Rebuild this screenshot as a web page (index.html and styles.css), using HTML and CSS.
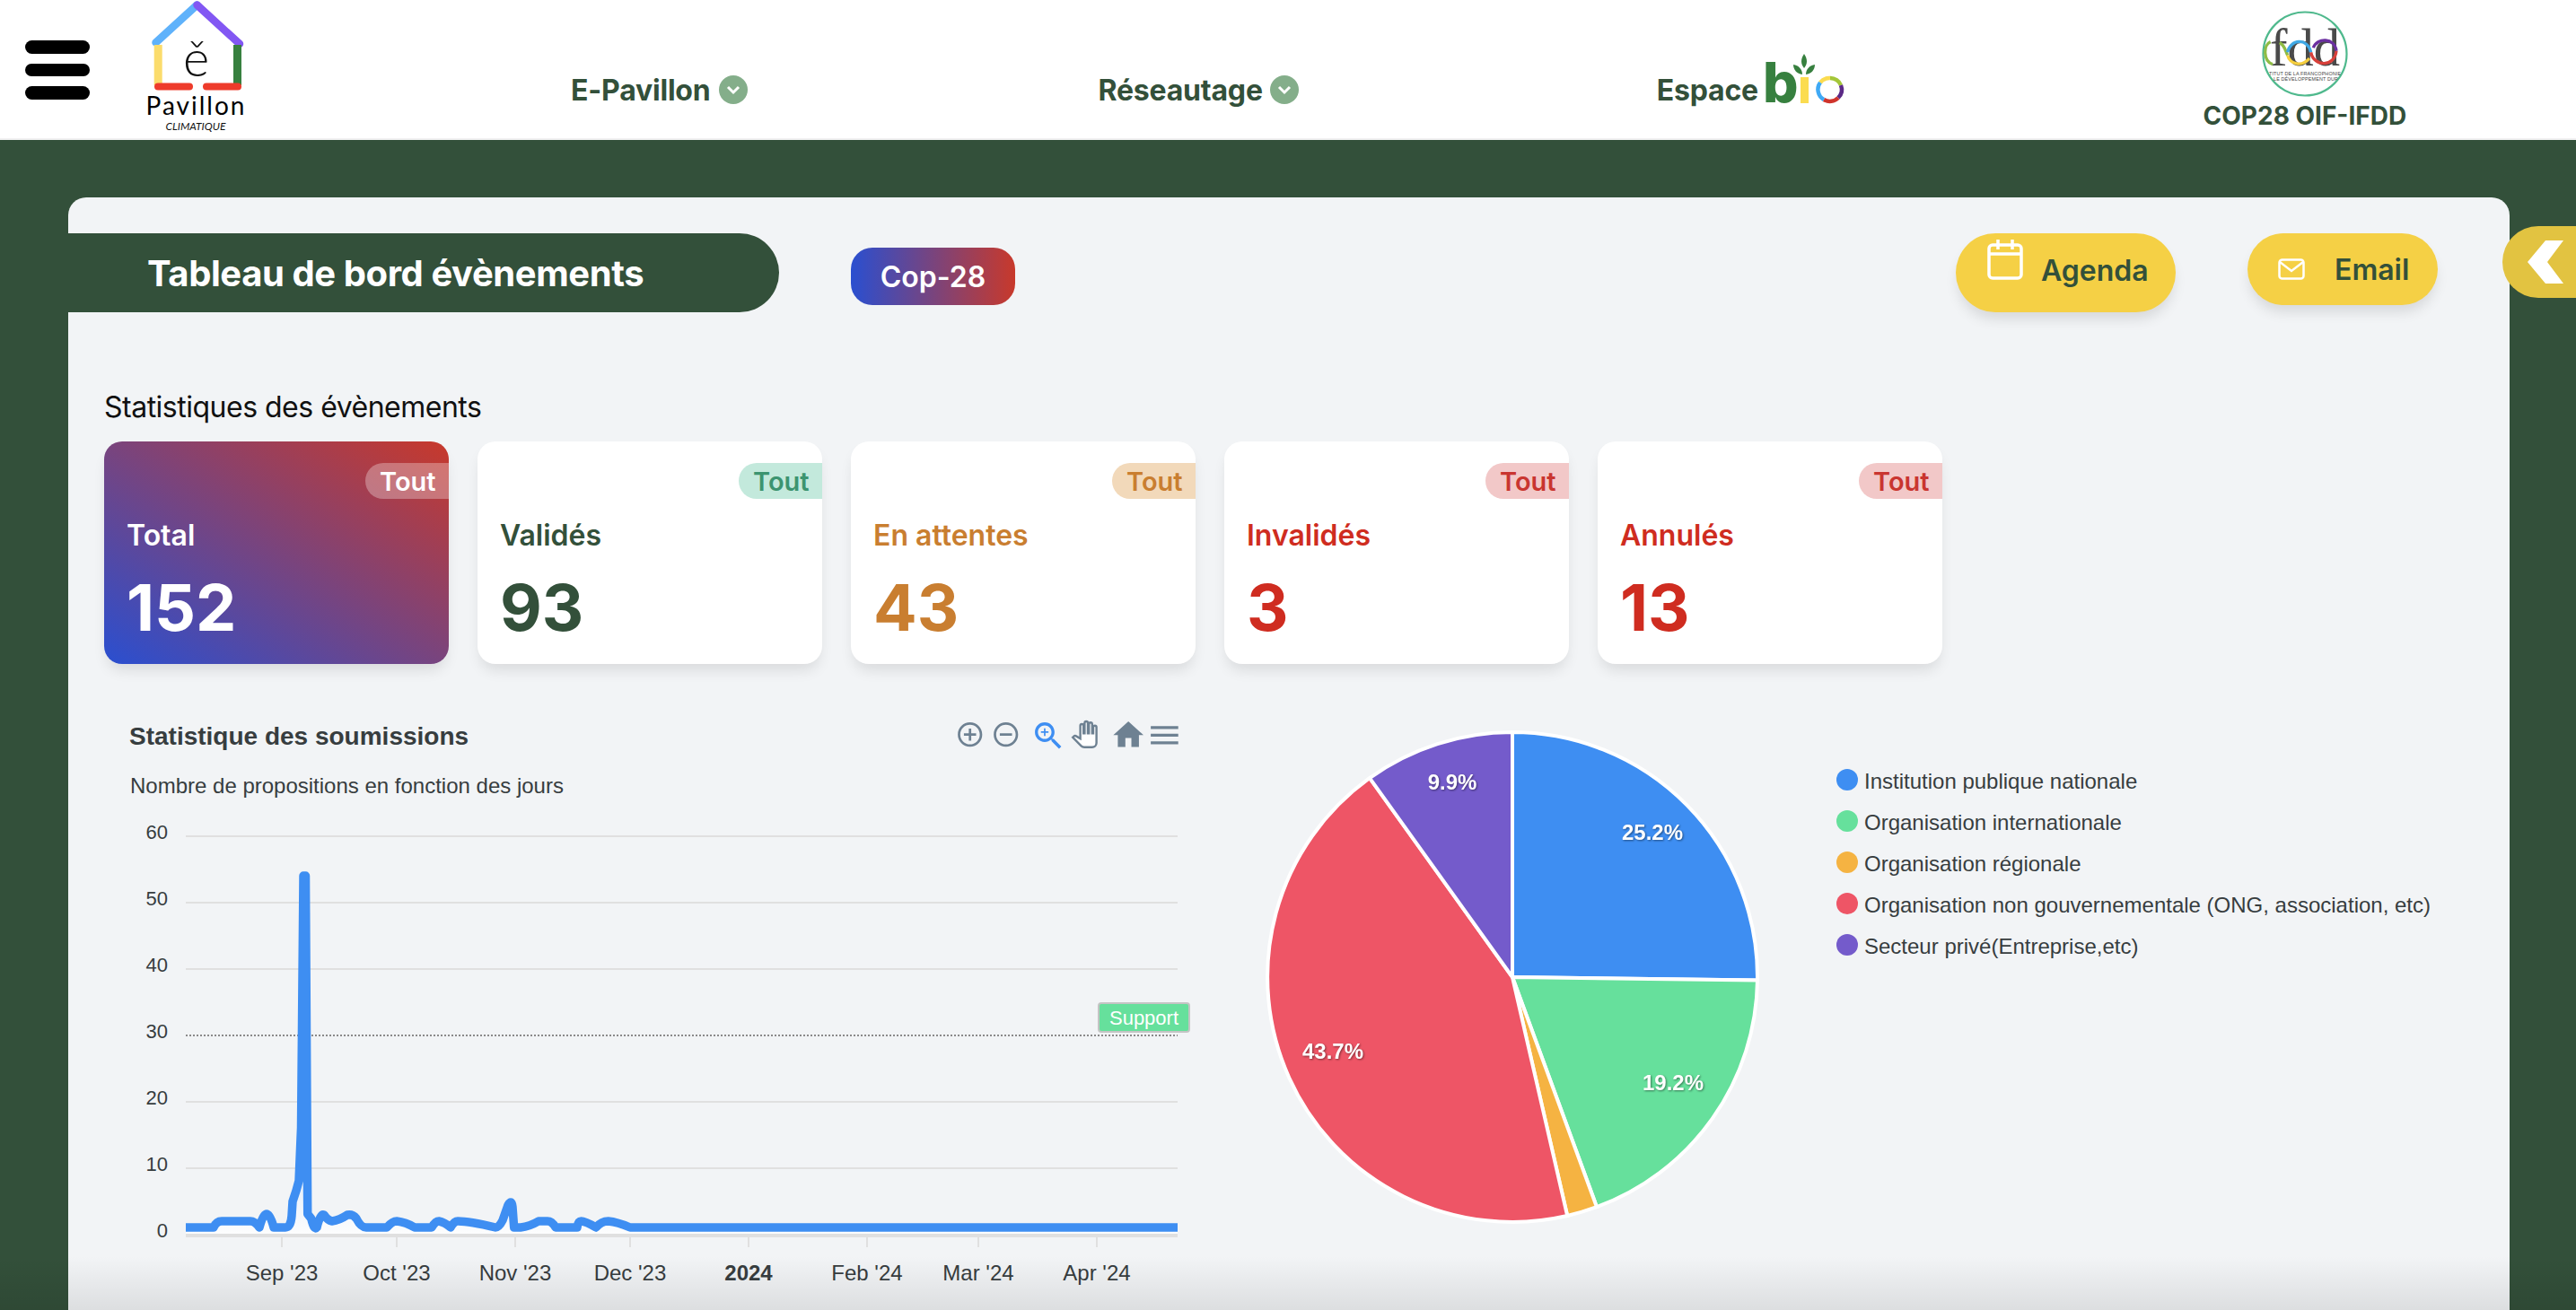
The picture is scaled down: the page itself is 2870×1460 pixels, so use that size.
FILE: index.html
```html
<!DOCTYPE html>
<html lang="fr">
<head>
    <meta charset="UTF-8">
    <meta name="viewport" content="width=device-width, initial-scale=1.0">
    <title>Tableau de bord évènements</title>
    <link rel="stylesheet" href="styles.css">
</head>
<body>
    <!-- Barre du haut -->
    <header class="topbar">
        <div class="burger"><span></span><span></span><span></span></div>

        <svg class="logo" viewBox="160 0 120 156" width="120" height="156">
            <line x1="173.5" y1="47.5" x2="219.5" y2="5.5" stroke="#5fb2fb" stroke-width="8.5" stroke-linecap="round"/>
            <line x1="219.5" y1="5.5" x2="267" y2="49" stroke="#8257f3" stroke-width="8.5" stroke-linecap="round"/>
            <rect x="171.7" y="50" width="9" height="45" fill="#fbdc6c"/>
            <rect x="260" y="50" width="9" height="45" fill="#37803f"/>
            <line x1="176" y1="96.5" x2="211" y2="96.5" stroke="#ee3b2b" stroke-width="8" stroke-linecap="round"/>
            <line x1="230" y1="96.5" x2="265" y2="96.5" stroke="#ee3b2b" stroke-width="8" stroke-linecap="round"/>
            <text class="logo-e" x="218.5" y="85" text-anchor="middle">ě</text>
            <text class="logo-name" x="218.5" y="128" text-anchor="middle">Pavillon</text>
            <text class="logo-sub" x="218" y="145" text-anchor="middle">CLIMATIQUE</text>
        </svg>

        <a class="nav-item nav-pavillon">E-Pavillon
            <svg class="chevron" viewBox="0 0 32 32" width="32" height="32"><circle cx="16" cy="16" r="16" fill="#84ae8a"/><path d="M10 13l6 6 6-6" fill="none" stroke="#fff" stroke-width="3"/></svg>
        </a>
        <a class="nav-item nav-reseau">Réseautage
            <svg class="chevron" viewBox="0 0 32 32" width="32" height="32"><circle cx="16" cy="16" r="16" fill="#84ae8a"/><path d="M10 13l6 6 6-6" fill="none" stroke="#fff" stroke-width="3"/></svg>
        </a>
        <a class="nav-item nav-espace">Espace
            <svg class="bio" viewBox="1965 56 96 64" width="96" height="64">
                <text class="bio-b" x="1966" y="114">b</text>
                <rect x="2008" y="86" width="9" height="29" fill="#fbdc50"/>
                <path d="M2012 60c-4 6-4 11 0 16 4-5 4-10 0-16z" fill="#37803f"/>
                <path d="M2000 72c0 6 4 10 10 11 0-6-4-10-10-11z" fill="#37803f"/>
                <path d="M2024 72c0 6-4 10-10 11 0-6 4-10 10-11z" fill="#37803f"/>
                <g fill="none" stroke-width="4.5">
                    <path d="M2030 92a13 13 0 0 1 11-5" stroke="#fbdc50"/>
                    <path d="M2041 87a13 13 0 0 1 12 8" stroke="#a4c639"/>
                    <path d="M2053 95a13 13 0 0 1-3 14" stroke="#5b2a86"/>
                    <path d="M2050 109a13 13 0 0 1-16 2" stroke="#d0342c"/>
                    <path d="M2034 111a13 13 0 0 1-4-19" stroke="#3fa9f5"/>
                </g>
            </svg>
        </a>
        <div class="nav-cop">
            <svg class="fdd" viewBox="2520 10 100 100" width="100" height="100">
                <defs><clipPath id="rond"><circle cx="2570" cy="60" r="46"/></clipPath></defs>
                <circle cx="2570" cy="60" r="46.5" fill="#fff" stroke="#4fb98d" stroke-width="2.2"/>
                <g clip-path="url(#rond)">
                    <text class="fdd-name" x="2531" y="73" textLength="78" lengthAdjust="spacingAndGlyphs">fdd</text>
                    <g transform="translate(2460 0) scale(.3333)" fill="none" stroke-width="10">
                        <path d="M215 140C190 150 190 205 222 215M245 143C262 150 265 170 272 185" stroke="#8fbc45"/>
                        <path d="M272 185C280 215 320 225 345 195" stroke="#f6cf3f"/>
                        <path d="M272 175C280 130 340 125 350 175" stroke="#3fa9e6"/>
                        <path d="M350 175C360 225 430 225 435 170" stroke="#d8403a"/>
                        <path d="M435 170C430 125 370 125 358 160" stroke="#6b2fa0"/>
                    </g>
                    <text class="fdd-small" x="2530" y="84" textLength="80">TITUT DE LA FRANCOPHONIE</text>
                    <text class="fdd-small" x="2535" y="90" textLength="72">LE DÉVELOPPEMENT DUR</text>
                </g>
            </svg>
            <span class="cop-label">COP28 OIF-IFDD</span>
        </div>
    </header>

    <main class="contenu">
        <section class="panneau">
            <div class="entete">
                <h1 class="titre">Tableau de bord évènements</h1>
                <span class="pill-cop">Cop-28</span>
                <a class="btn btn-agenda">
                    <svg viewBox="0 0 40 46" width="40" height="46" fill="none" stroke="#fff" stroke-width="3.5">
                        <rect x="2" y="7" width="36" height="37" rx="4"/>
                        <path d="M2 17h36M12 1v11M28 1v11"/>
                    </svg>
                    <span>Agenda</span>
                </a>
                <a class="btn btn-email">
                    <svg viewBox="0 0 30 24" width="30" height="24" fill="none" stroke="#fff" stroke-width="2.5">
                        <rect x="1.5" y="1.5" width="27" height="21" rx="3"/>
                        <path d="M2 4l13 10L28 4"/>
                    </svg>
                    <span>Email</span>
                </a>
            </div>

            <h2 class="stats-titre">Statistiques des évènements</h2>

            <!-- Cartes de statistiques -->
            <div class="cartes">
                <div class="carte carte-total">
                    <span class="badge">Tout</span>
                    <p class="carte-label">Total</p>
                    <p class="carte-nombre">152</p>
                </div>
                <div class="carte carte-valide">
                    <span class="badge">Tout</span>
                    <p class="carte-label">Validés</p>
                    <p class="carte-nombre">93</p>
                </div>
                <div class="carte carte-attente">
                    <span class="badge">Tout</span>
                    <p class="carte-label">En attentes</p>
                    <p class="carte-nombre">43</p>
                </div>
                <div class="carte carte-rouge">
                    <span class="badge">Tout</span>
                    <p class="carte-label">Invalidés</p>
                    <p class="carte-nombre">3</p>
                </div>
                <div class="carte carte-rouge">
                    <span class="badge">Tout</span>
                    <p class="carte-label">Annulés</p>
                    <p class="carte-nombre">13</p>
                </div>
            </div>

            <div class="graphes">
                <!-- Courbe des soumissions -->
                <svg class="courbe" viewBox="116 780 1224 680" width="1224" height="680">
                    <defs>
                        <linearGradient id="aire" x1="0" y1="0" x2="0" y2="1">
                            <stop offset="0" stop-color="#3e8ef2" stop-opacity=".3"/>
                            <stop offset="1" stop-color="#fff" stop-opacity=".8"/>
                        </linearGradient>
                    </defs>
                    <text class="ch-titre" x="144" y="830">Statistique des soumissions</text>
                    <text class="ch-sous" x="145" y="884">Nombre de propositions en fonction des jours</text>

                    <g class="ch-toolbar">
                        <path transform="translate(1064.4 802.4) scale(1.36)" d="M13 7h-2v4H7v2h4v4h2v-4h4v-2h-4V7zm-1-5C6.48 2 2 6.48 2 12s4.48 10 10 10 10-4.48 10-10S17.52 2 12 2zm0 18c-4.41 0-8-3.59-8-8s3.59-8 8-8 8 3.59 8 8-3.59 8-8 8z"/>
                        <path transform="translate(1104.4 802.4) scale(1.36)" d="M7 11v2h10v-2H7zm5-9C6.48 2 2 6.48 2 12s4.48 10 10 10 10-4.48 10-10S17.52 2 12 2zm0 18c-4.41 0-8-3.59-8-8s3.59-8 8-8 8 3.59 8 8-3.59 8-8 8z"/>
                        <path class="ch-zoom" transform="translate(1148 800) scale(1.68)" d="M15.5 14h-.79l-.28-.27C15.41 12.59 16 11.11 16 9.5 16 5.91 13.09 3 9.5 3S3 5.91 3 9.5 5.91 16 9.5 16c1.61 0 3.09-.59 4.23-1.57l.27.28v.79l5 4.99L20.49 19l-4.99-5zm-6 0C7.01 14 5 11.99 5 9.5S7.01 5 9.5 5 14 7.01 14 9.5 11.99 14 9.5 14zM12 10h-2v2H9v-2H7V9h2V7h1v2h2v1z"/>
                        <path class="ch-main" transform="translate(1194 804) scale(1.2)" d="M23 5.5V20c0 2.2-1.8 4-4 4h-7.3c-1.08 0-2.1-.43-2.85-1.19L1 14.83s1.26-1.23 1.3-1.25c.22-.19.49-.29.79-.29.22 0 .42.06.6.16.04.01 4.31 2.46 4.31 2.46V4c0-.83.67-1.5 1.5-1.5S11 3.17 11 4v7h1V1.5c0-.83.67-1.5 1.5-1.5S15 .67 15 1.5V11h1V2.5c0-.83.67-1.5 1.5-1.5s1.5.67 1.5 1.5V11h1V5.5c0-.83.67-1.5 1.5-1.5s1.5.67 1.5 1.5z"/>
                        <path transform="translate(1237 799) scale(1.68)" d="M10 20v-6h4v6h5v-8h3L12 3 2 12h3v8z"/>
                        <path transform="translate(1277 799) scale(1.7)" d="M3 18h18v-2H3v2zm0-5h18v-2H3v2zm0-7v2h18V6H3z"/>
                    </g>

                    <g class="ch-grille">
                        <line x1="207" y1="932" x2="1312" y2="932"/>
                        <line x1="207" y1="1006" x2="1312" y2="1006"/>
                        <line x1="207" y1="1080" x2="1312" y2="1080"/>
                        <line x1="207" y1="1228" x2="1312" y2="1228"/>
                        <line x1="207" y1="1302" x2="1312" y2="1302"/>
                    </g>
                    <line class="ch-support" x1="207" y1="1154" x2="1312" y2="1154"/>

                    <g class="ch-axe-y" text-anchor="end">
                        <text x="187" y="935">60</text>
                        <text x="187" y="1009">50</text>
                        <text x="187" y="1083">40</text>
                        <text x="187" y="1157">30</text>
                        <text x="187" y="1231">20</text>
                        <text x="187" y="1305">10</text>
                        <text x="187" y="1379">0</text>
                    </g>

                    <path class="ch-aire" d="M207 1368H238Q241 1361 247 1361H279Q284 1361 289 1368Q297 1338 305 1368H318Q324 1368 325 1355L326 1339 330 1327 333 1316 335.5 1257 338 976 340.5 976 342.7 1353 346.7 1358Q350 1372 353 1368Q357 1352 361 1354Q365 1360 370 1361Q378 1360 387 1354Q393 1353 397 1358Q402 1368 408 1368H431Q437 1361 442 1361Q452 1362 462 1368H481Q485 1361 489 1361Q495 1362 502 1368Q506 1361 510 1361Q523 1361 552 1368Q556 1368 560 1360L566 1343Q570 1336 571 1345L572.7 1368H580Q590 1367 600 1361H610Q615 1361 619 1368H643Q644 1361 647.5 1361Q652 1361 664 1368Q670 1361 677.6 1361Q688 1362 702 1368H1312V1375H207Z"/>
                    <path class="ch-ligne" d="M207 1368H238Q241 1361 247 1361H279Q284 1361 289 1368Q297 1338 305 1368H318Q324 1368 325 1355L326 1339 330 1327 333 1316 335.5 1257 338 976 340.5 976 342.7 1353 346.7 1358Q350 1372 353 1368Q357 1352 361 1354Q365 1360 370 1361Q378 1360 387 1354Q393 1353 397 1358Q402 1368 408 1368H431Q437 1361 442 1361Q452 1362 462 1368H481Q485 1361 489 1361Q495 1362 502 1368Q506 1361 510 1361Q523 1361 552 1368Q556 1368 560 1360L566 1343Q570 1336 571 1345L572.7 1368H580Q590 1367 600 1361H610Q615 1361 619 1368H643Q644 1361 647.5 1361Q652 1361 664 1368Q670 1361 677.6 1361Q688 1362 702 1368H1312"/>

                    <rect class="ch-support-fond" x="1224" y="1118" width="101" height="32" rx="3"/>
                    <text class="ch-support-texte" x="1274.5" y="1142" text-anchor="middle">Support</text>

                    <g class="ch-base">
                        <line x1="207" y1="1377" x2="1312" y2="1377"/>
                        <path class="ch-tick" d="M314 1379v11M442 1379v11M574 1379v11M702 1379v11M834 1379v11M966 1379v11M1090 1379v11M1222 1379v11"/>
                    </g>
                    <g class="ch-axe-x" text-anchor="middle">
                        <text x="314" y="1427">Sep '23</text>
                        <text x="442" y="1427">Oct '23</text>
                        <text x="574" y="1427">Nov '23</text>
                        <text x="702" y="1427">Dec '23</text>
                        <text class="ch-annee" x="834" y="1427">2024</text>
                        <text x="966" y="1427">Feb '24</text>
                        <text x="1090" y="1427">Mar '24</text>
                        <text x="1222" y="1427">Apr '24</text>
                    </g>
                </svg>

                <!-- Répartition par type -->
                <svg class="camembert" viewBox="1400 790 600 600" width="600" height="600">
                    <g transform="translate(1685 1089)" stroke="#fff" stroke-width="4">
                        <path fill="#3e8ef2" d="M0 0V-273A273 273 0 0 1 273 3.4Z"/>
                        <path fill="#66e09c" d="M0 0L273 3.4A273 273 0 0 1 94 256.2Z"/>
                        <path fill="#f5b342" d="M0 0L94 256.2A273 273 0 0 1 61.2 266Z"/>
                        <path fill="#ee5566" d="M0 0L61.2 266A273 273 0 0 1-159-221.9Z"/>
                        <path fill="#745bcb" d="M0 0L-159-221.9A273 273 0 0 1 0-273Z"/>
                    </g>
                    <g class="pie-valeur" text-anchor="middle">
                        <text x="1841" y="936">25.2%</text>
                        <text x="1864" y="1215">19.2%</text>
                        <text x="1485" y="1180">43.7%</text>
                        <text x="1618" y="880">9.9%</text>
                    </g>
                </svg>

                <ul class="legende">
                    <li><i class="puce puce-bleu"></i>Institution publique nationale</li>
                    <li><i class="puce puce-vert"></i>Organisation internationale</li>
                    <li><i class="puce puce-orange"></i>Organisation régionale</li>
                    <li><i class="puce puce-rouge"></i>Organisation non gouvernementale (ONG, association, etc)</li>
                    <li><i class="puce puce-violet"></i>Secteur privé(Entreprise,etc)</li>
                </ul>
            </div>
        </section>

        <div class="onglet">
            <svg viewBox="0 0 82 80" width="82" height="80"><path d="M48 16h20L50 40l18 24H48L28 40z" fill="#fff"/></svg>
        </div>
    </main>

    <div class="ombre-bas"></div>
</body>
</html>
```

FILE: styles.css
```css
/* Global */
* {
    box-sizing: border-box;
}

html, body {
    height: 1460px;
    overflow: hidden;
}

body {
    margin: 0;
    position: relative;
    font-family: Inter, "Liberation Sans", sans-serif;
    background-color: #33503a;
}

/* Barre du haut */
.topbar {
    display: flex;
    align-items: flex-start;
    height: 156px;
    background-color: #fff;
    border-bottom: 2px solid #f1f1f1;
}

.burger {
    display: flex;
    flex-direction: column;
    gap: 11px;
    width: 72px;
    margin: 45px 0 0 28px;
}

.burger span {
    height: 14.5px;
    border-radius: 8px;
    background-color: #000;
}

.logo {
    margin-left: 60px;
    flex: none;
}

.logo-e {
    font: 300 56px Lato, sans-serif;
    fill: #111;
}

.logo-name {
    font: 400 28px Lato, sans-serif;
    letter-spacing: 2px;
    fill: #000;
}

.logo-sub {
    font: italic 400 12px Lato, sans-serif;
    fill: #111;
}

.nav-item {
    display: flex;
    flex: none;
    align-items: center;
    height: 32px;
    margin-top: 84px;
    font-size: 32px;
    font-weight: 700;
    letter-spacing: -0.2px;
    color: #33503a;
}

.nav-pavillon {
    margin-left: 356px;
    gap: 9px;
}

.nav-reseau {
    margin-left: 391px;
    gap: 8px;
}

.nav-espace {
    margin-left: 399px;
    gap: 4px;
}

.chevron {
    flex: none;
}

.bio {
    margin-top: -24px;
    flex: none;
}

.bio-b {
    font: 800 62px Inter, sans-serif;
    fill: #37803f;
}

.nav-cop {
    display: flex;
    flex: none;
    flex-direction: column;
    align-items: center;
    width: 230px;
    margin-left: 394px;
    padding-top: 10px;
}

.fdd {
    display: block;
    flex: none;
}

.fdd-name {
    font: 400 60px "Liberation Serif", serif;
    fill: #4a4a4a;
}

.fdd-small {
    font: 400 5.4px "Liberation Sans", sans-serif;
    fill: #444;
}

.cop-label {
    font-size: 28px;
    font-weight: 700;
    line-height: 30px;
    margin-top: 4px;
    color: #33503a;
    white-space: nowrap;
}

/* Contenu */
.contenu {
    padding: 64px 74px 0 76px;
    height: 1304px;
    overflow: hidden;
    position: relative;
}

.panneau {
    height: 1300px;
    padding-top: 40px;
    border-radius: 20px 20px 0 0;
    background-color: #f2f4f6;
}

.entete {
    display: flex;
    align-items: flex-start;
}

.titre {
    display: flex;
    align-items: center;
    width: 792px;
    height: 88px;
    margin: 0;
    padding-left: 88px;
    font-size: 40px;
    font-weight: 700;
    letter-spacing: -0.42px;
    color: #fff;
    background-color: #33503a;
    border-radius: 0 44px 44px 0;
}

.pill-cop {
    display: flex;
    align-items: center;
    justify-content: center;
    width: 183px;
    height: 64px;
    margin: 16px 0 0 80px;
    font-size: 32px;
    font-weight: 600;
    color: #fff;
    border-radius: 24px;
    background: linear-gradient(to right, #2a4fd0, #c8392b);
}

.btn {
    display: flex;
    align-items: center;
    font-size: 32px;
    font-weight: 600;
    color: #33503a;
    background-color: #f5d045;
    box-shadow: 0 10px 15px -3px rgba(0, 0, 0, 0.12);
}

.btn-agenda {
    align-items: flex-start;
    gap: 20px;
    width: 245px;
    height: 88px;
    margin-left: auto;
    padding: 6px 0 0 35px;
    border-radius: 44px;
}

.btn-agenda span {
    margin-top: 16px;
    line-height: 40px;
}

.btn-email {
    gap: 33px;
    width: 212px;
    height: 80px;
    margin: 0 80px 0 80px;
    padding-left: 34px;
    border-radius: 40px;
}

.stats-titre {
    margin: 86px 0 18px 40px;
    font-size: 32px;
    font-weight: 400;
    letter-spacing: -0.5px;
    line-height: 40px;
    color: #111;
}

/* Cartes */
.cartes {
    display: flex;
    gap: 32px;
    margin-left: 40px;
}

.carte {
    position: relative;
    width: 384px;
    height: 248px;
    padding: 85px 25px 0;
    border-radius: 20px;
    background-color: #fff;
    box-shadow: 0 10px 15px -3px rgba(0, 0, 0, 0.1);
}

.carte-label {
    margin: 0;
    font-size: 32px;
    font-weight: 600;
    line-height: 40px;
}

.carte-nombre {
    margin: 20px 0 0;
    font-size: 72px;
    font-weight: 700;
    line-height: 80px;
}

.badge {
    position: absolute;
    top: 24px;
    right: 0;
    display: flex;
    align-items: center;
    justify-content: flex-start;
    width: 93px;
    height: 40px;
    padding-left: 16px;
    font-size: 29px;
    font-weight: 600;
    border-radius: 20px 0 0 20px;
}

.carte-total {
    color: #fff;
    background: linear-gradient(to top right, #2a4fd0, #c8392b);
}

.carte-total .badge {
    background-color: rgba(255, 255, 255, 0.3);
}

.carte-valide {
    color: #33503a;
}

.carte-valide .badge {
    color: #3c9470;
    background-color: #c3e9dc;
}

.carte-attente {
    color: #c97e30;
}

.carte-attente .badge {
    color: #c97e30;
    background-color: #f2d9ba;
}

.carte-rouge {
    color: #cf2c20;
}

.carte-rouge .badge {
    color: #c93530;
    background-color: #f2c8c8;
}

/* Graphes */
.graphes {
    display: flex;
    align-items: flex-start;
    margin: 40px 0 0 40px;
}

.courbe {
    flex: none;
}

.camembert {
    flex: none;
    margin: 10px 0 0 60px;
}

.courbe text {
    font-family: "Liberation Sans", Arial, sans-serif;
}

.ch-titre {
    font-size: 28px;
    font-weight: 700;
    fill: #373d3f;
}

.ch-sous {
    font-size: 24px;
    fill: #373d3f;
}

.ch-toolbar path {
    fill: #6e8192;
}

.ch-toolbar .ch-zoom {
    fill: #3e8ef2;
}

.ch-toolbar .ch-main {
    fill: #fff;
    stroke: #6e8192;
    stroke-width: 2;
}

.ch-grille line {
    stroke: #e0e0e0;
    stroke-width: 2;
}

.ch-support {
    stroke: #8a8a8a;
    stroke-width: 2;
    stroke-dasharray: 2 2;
}

.ch-axe-y text {
    font-size: 22px;
    fill: #373d3f;
}

.ch-axe-x text {
    font-size: 24px;
    fill: #373d3f;
}

.ch-axe-x .ch-annee {
    font-weight: 700;
}

.ch-aire {
    fill: url(#aire);
}

.ch-ligne {
    fill: none;
    stroke: #3e8ef2;
    stroke-width: 9.5;
    stroke-linejoin: round;
}

.ch-support-fond {
    fill: #66e09c;
    stroke: #c4c4c4;
    stroke-width: 2;
}

.ch-support-texte {
    font-size: 22px;
    fill: #fff;
}

.ch-base line {
    stroke: #e0e0e0;
    stroke-width: 4;
}

.ch-tick {
    fill: none;
    stroke: #e0e0e0;
    stroke-width: 2;
}

.pie-valeur text {
    font: 700 24px "Liberation Sans", Arial, sans-serif;
    fill: #fff;
    filter: drop-shadow(1px 1px 1px rgba(0, 0, 0, 0.45));
}

/* Légende */
.legende {
    flex: none;
    margin: 68px 0 0 46px;
    padding: 0;
    list-style: none;
    font: 24px "Liberation Sans", Arial, sans-serif;
    color: #373d3f;
}

.legende li {
    display: flex;
    align-items: center;
    gap: 7px;
    height: 46px;
    white-space: nowrap;
}

.puce {
    flex: none;
    width: 24px;
    height: 24px;
    margin-top: -4px;
    border-radius: 50%;
}

.puce-bleu { background-color: #3e8ef2; }
.puce-vert { background-color: #66e09c; }
.puce-orange { background-color: #f5b342; }
.puce-rouge { background-color: #ee5566; }
.puce-violet { background-color: #745bcb; }

/* Onglet de droite */
.onglet {
    position: absolute;
    top: 96px;
    right: 0;
    width: 82px;
    height: 80px;
    border-radius: 40px 0 0 40px;
    background-color: #e2c341;
}

.onglet svg {
    display: block;
}

.ombre-bas {
    position: absolute;
    left: 0;
    right: 0;
    bottom: 0;
    height: 60px;
    background: linear-gradient(to bottom, rgba(0, 0, 0, 0), rgba(0, 0, 0, 0.09));
}
```
